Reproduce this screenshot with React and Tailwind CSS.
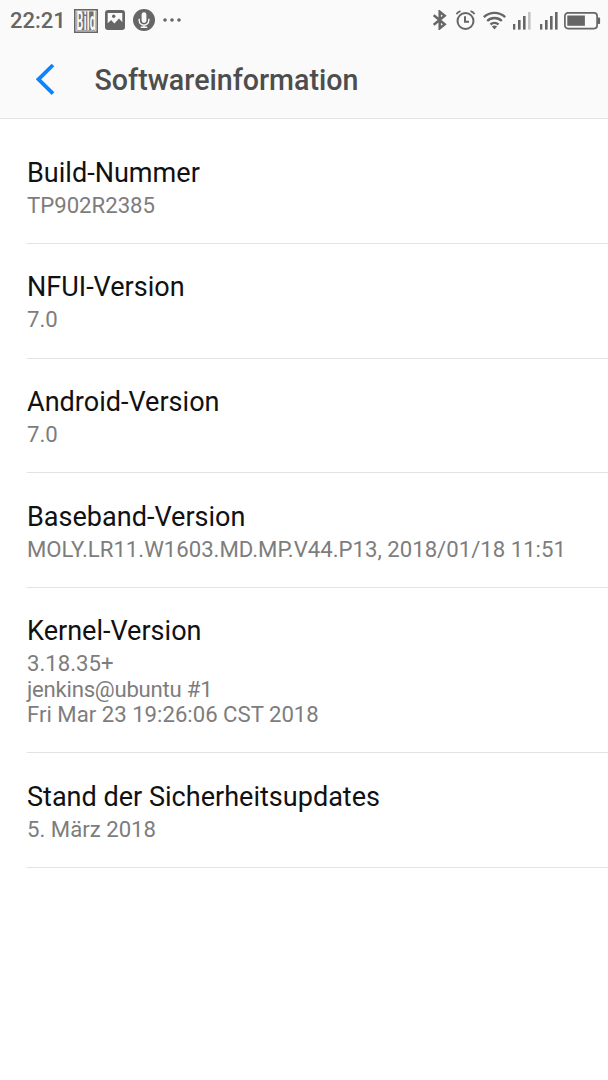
const entries = [
  { title: "Build-Nummer", lines: ["TP902R2385"] },
  { title: "NFUI-Version", lines: ["7.0"] },
  { title: "Android-Version", lines: ["7.0"] },
  { title: "Baseband-Version", lines: ["MOLY.LR11.W1603.MD.MP.V44.P13, 2018/01/18 11:51"] },
  {
    title: "Kernel-Version",
    lines: ["3.18.35+", "jenkins@ubuntu #1", "Fri Mar 23 19:26:06 CST 2018"],
  },
  { title: "Stand der Sicherheitsupdates", lines: ["5. März 2018"] },
];

function BildIcon() {
  return (
    <svg className="ml-[9px] overflow-visible" width="24" height="24" viewBox="0 0 24 24" aria-hidden>
      <rect width="24" height="24" fill="#666" />
      <rect x="2" y="2" width="20" height="20" fill="#707070" stroke="#eee" strokeWidth="0.9" />
      <text
        transform="translate(2.6 21) scale(0.42 1)"
        fontFamily="Roboto, sans-serif"
        fontWeight="700"
        fontSize="25"
        letterSpacing="0.8"
        fill="#fafafa"
      >
        Bild
      </text>
    </svg>
  );
}

function PictureIcon() {
  return (
    <svg className="mb-px ml-[7px]" width="20" height="20" viewBox="0 0 20 20" aria-hidden>
      <rect width="20" height="20" rx="3" fill="#666" />
      <path d="M2.7 3h14.6v9.2l-3.3-3.7-4.6 5-3.3-3.4-3.4 3.2z" fill="#fafafa" />
      <circle cx="8.7" cy="6.2" r="1.7" fill="#666" />
    </svg>
  );
}

function MicIcon() {
  return (
    <svg className="mb-px ml-2" width="22" height="22" viewBox="0 0 22 22" aria-hidden>
      <circle cx="11" cy="11" r="11" fill="#666" />
      <rect x="8.6" y="3.3" width="4.8" height="10.6" rx="2.4" fill="#fafafa" />
      <path d="M6.2 9.7v1.9a4.8 4.5 0 0 0 9.6 0V9.7M11 16v2.3M7.8 18.3h6.4" fill="none" stroke="#fafafa" strokeWidth="1.4" />
    </svg>
  );
}

function DotsIcon() {
  return (
    <svg className="mb-px ml-2" width="18" height="4" viewBox="0 0 18 4" fill="#666" aria-hidden>
      <circle cx="2" cy="2" r="1.8" />
      <circle cx="9" cy="2" r="1.8" />
      <circle cx="16" cy="2" r="1.8" />
    </svg>
  );
}

function BluetoothIcon() {
  return (
    <svg className="mb-px" width="14" height="20" viewBox="0 0 14 20" fill="none" stroke="#666" strokeWidth="2.5" aria-hidden>
      <path d="M.7 5.2l11 9.1-5 4.1V1.7l5 4.1L.7 14.9" />
    </svg>
  );
}

function AlarmIcon() {
  return (
    <svg className="mb-px ml-[9px]" width="20" height="20" viewBox="0 0 20 20" fill="none" stroke="#666" strokeWidth="2" aria-hidden>
      <circle cx="9.5" cy="11" r="8" />
      <path d="M9 6.2v5.5h4" />
      <path d="M.5 4.2Q1.7 1.9 4.5 1.1M18.5 4.2Q17.3 1.9 14.5 1.1" strokeWidth="1.8" />
    </svg>
  );
}

function WifiIcon() {
  return (
    <svg className="ml-[7px]" width="24" height="19" viewBox="0 0 24 19" fill="none" stroke="#666" strokeWidth="2.4" aria-hidden>
      <path d="M.8 6.2a15.4 15.4 0 0 1 21.4 0M4.2 10a10.5 10.5 0 0 1 14.6 0M7.5 13.5a6 6 0 0 1 8 0" />
      <path d="M8.9 15.6a4.2 4.2 0 0 1 5.2 0L11.5 18.6z" fill="#666" stroke="none" />
    </svg>
  );
}

function SignalIcon({ className, lastBar = "#666" }) {
  return (
    <svg className={className} width="18" height="18" viewBox="0 0 18 18" fill="#666" aria-hidden>
      <rect x="0" y="12" width="2.3" height="5.6" />
      <rect x="5" y="8" width="2.6" height="9.6" />
      <rect x="10" y="4" width="2.6" height="13.6" />
      <rect x="15" y="0" width="2.6" height="17.6" fill={lastBar} />
    </svg>
  );
}

function BatteryIcon() {
  return (
    <svg className="ml-1.5" width="37" height="18" viewBox="0 0 37 18" aria-hidden>
      <rect x="0.9" y="0.9" width="32.2" height="15.7" rx="3" fill="none" stroke="#666" strokeWidth="1.7" />
      <rect x="3.3" y="3.5" width="17.6" height="10.3" fill="#666" />
      <path d="M34 5.5h1.1q1 0 1 1v4.6q0 1-1 1H34z" fill="#666" />
    </svg>
  );
}

function StatusBar() {
  return (
    <div className="flex h-10 items-center justify-between pl-2.5 pr-[7px] pt-px">
      <div className="flex items-center">
        <span className="w-[55px] whitespace-nowrap pt-px text-[22px] font-medium leading-none text-[#666]">22:21</span>
        <BildIcon />
        <PictureIcon />
        <MicIcon />
        <DotsIcon />
      </div>
      <div className="flex items-center">
        <BluetoothIcon />
        <AlarmIcon />
        <WifiIcon />
        <SignalIcon className="ml-1.5" lastBar="#c4c4c4" />
        <SignalIcon className="ml-[9px]" />
        <BatteryIcon />
      </div>
    </div>
  );
}

function TitleBar() {
  return (
    <div className="flex h-[78px] items-center pl-9">
      <svg className="shrink-0" width="19" height="32" viewBox="0 0 19 32" fill="none" aria-hidden>
        <path d="M17 2L2.5 16.3 17 30.6" stroke="#0a84ff" strokeWidth="3.8" />
      </svg>
      <h1 className="ml-[39.5px] pt-0.5 text-[28.6px] font-medium leading-8 text-[#4d4d4d]">Softwareinformation</h1>
    </div>
  );
}

function InfoRow({ title, lines }) {
  return (
    <li className="border-b border-[#e3e3e3] pb-[24.9px] pt-[27.4px]">
      <h2 className="text-[27.05px] leading-8 text-[#111]">{title}</h2>
      <div className="mt-1 text-[22.17px] leading-[25.4px] text-[#7d7d7d]">
        {lines.map((line) => (
          <p key={line} className={`whitespace-nowrap ${line.includes("@") ? "tracking-[-0.25px]" : ""}`}>
            {line}
          </p>
        ))}
      </div>
    </li>
  );
}

function App() {
  return (
    <div className="h-[1080px] w-[608px] overflow-hidden bg-white font-[Roboto,sans-serif]">
      <header className="border-b border-[#e3e3e3] bg-[#fafafa]">
        <StatusBar />
        <TitleBar />
      </header>
      <ul className="pl-[27px] pt-[10.2px]">
        {entries.map((entry) => (
          <InfoRow key={entry.title} title={entry.title} lines={entry.lines} />
        ))}
      </ul>
    </div>
  );
}

export default App;
